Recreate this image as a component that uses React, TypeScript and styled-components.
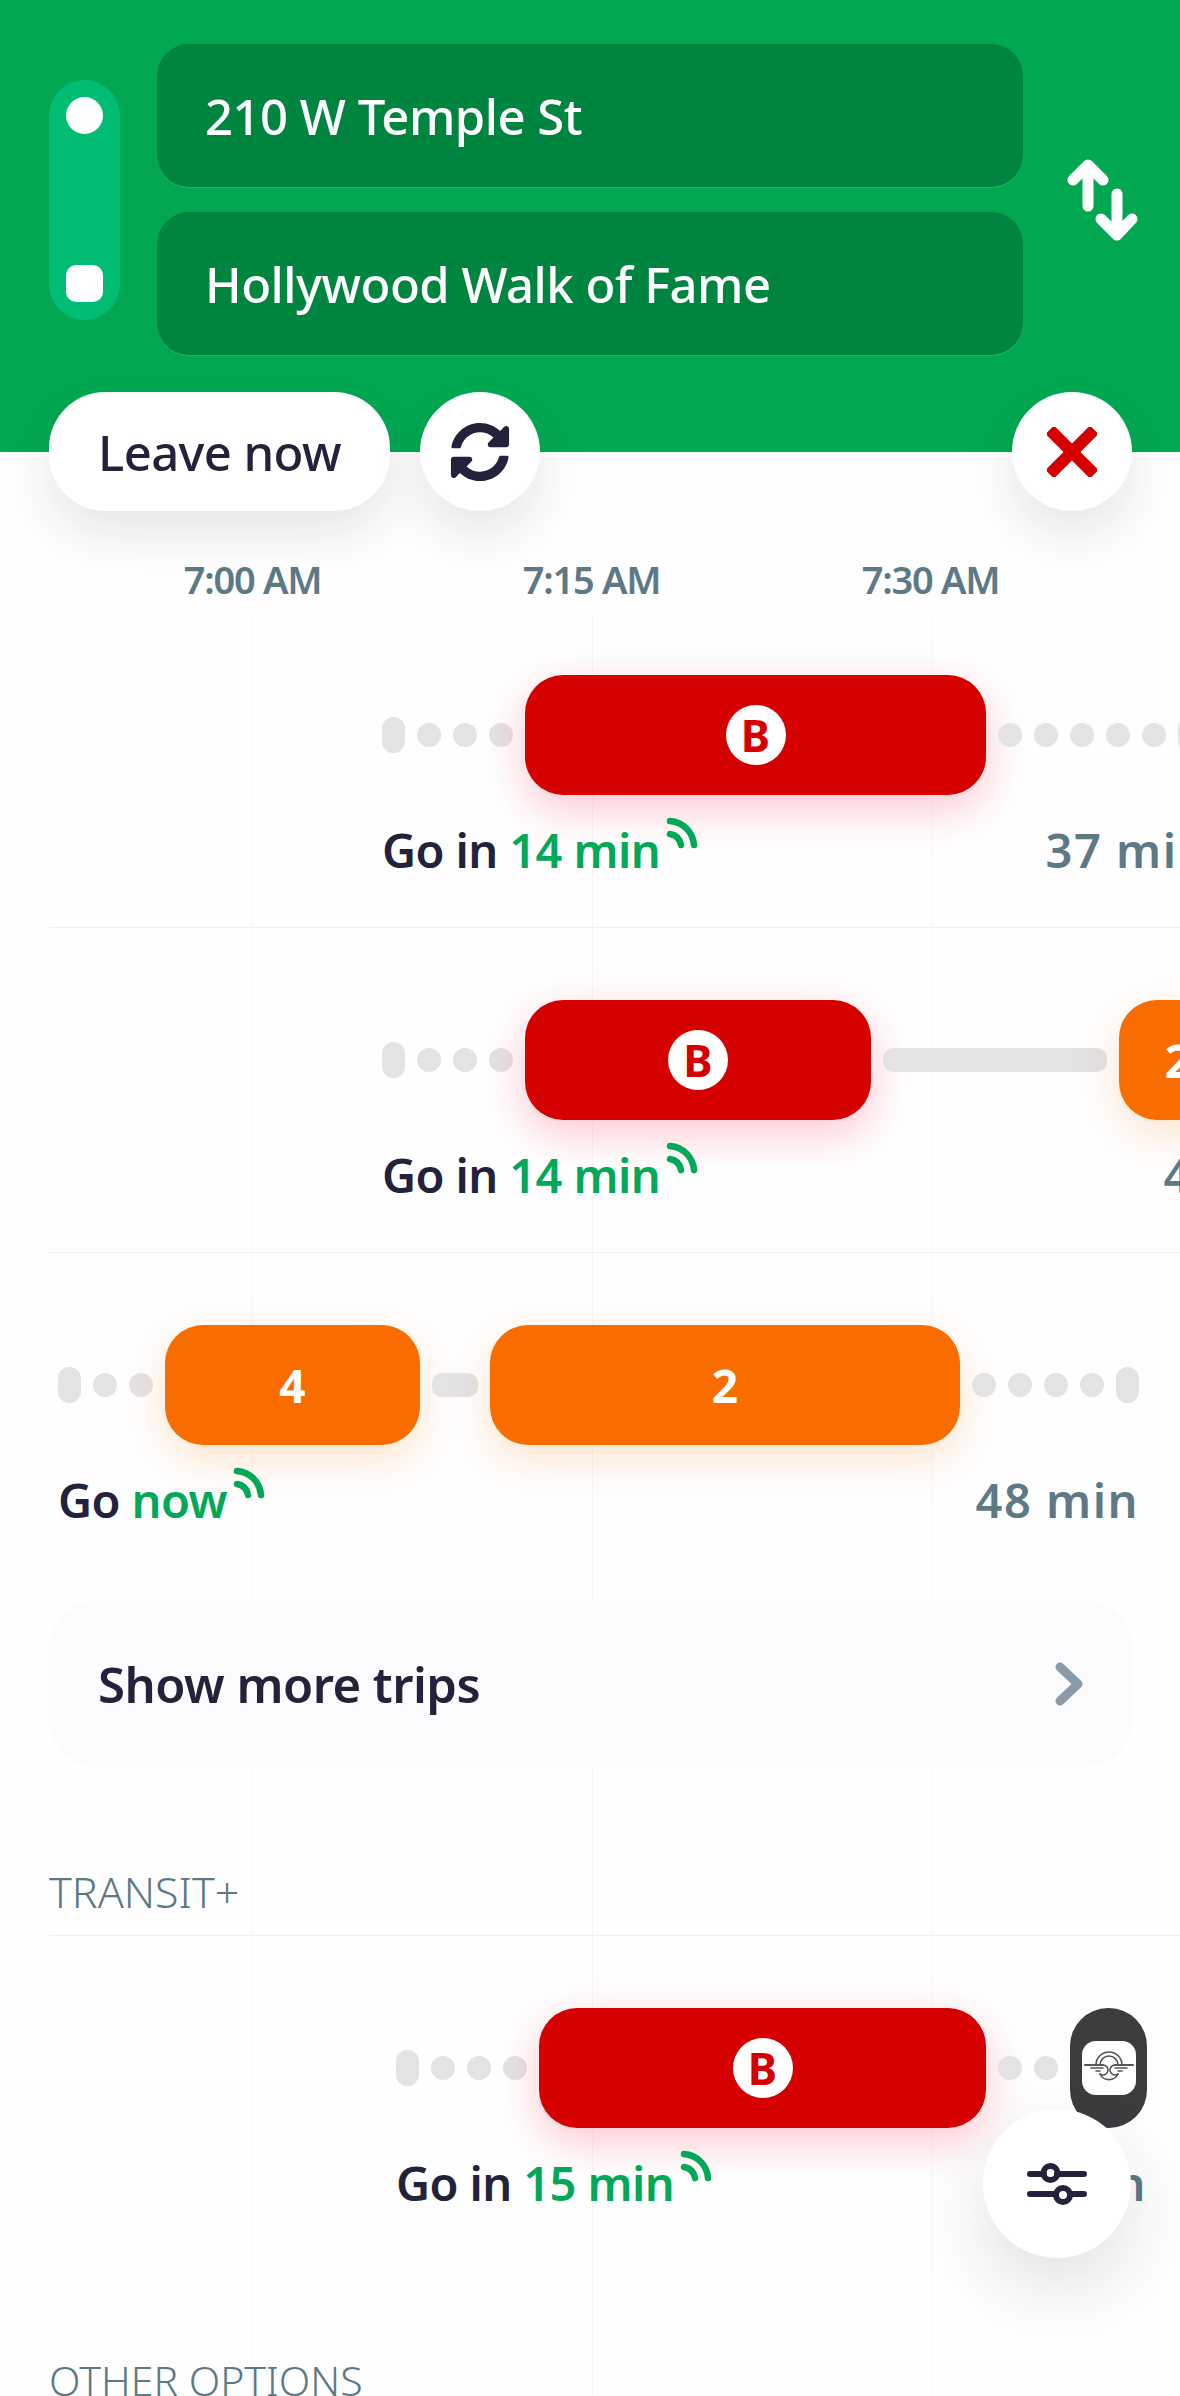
import { Fragment } from 'react';
import styled, { createGlobalStyle } from 'styled-components';
import { FaSyncAlt } from 'react-icons/fa';

const GlobalStyle = createGlobalStyle`
  html, body { margin: 0; padding: 0; background: #fff; }
  * { box-sizing: border-box; }
`;

const INK = '#22223a';
const SLATE = '#5d7985';
const GREEN = '#00a858';
const RED = '#d50000';
const ORANGE = '#f96c00';

const Page = styled.div`
  position: relative;
  width: 1180px;
  height: 2396px;
  overflow: hidden;
  background: #fefefe;
  font-family: 'Noto Sans', sans-serif;
  color: ${INK};
`;

const Header = styled.header`
  position: relative;
  z-index: 2;
  height: 452px;
  background: #02a851;
  padding: 44px 0 0 49px;
`;
const RouteRow = styled.div`
  display: flex;
  align-items: center;
`;
const StopTrack = styled.div`
  flex: none;
  display: flex;
  flex-flow: column;
  align-items: center;
  justify-content: space-between;
  width: 71px;
  height: 240px;
  padding: 17px 0 18px;
  border-radius: 36px;
  background: #00bd73;
`;
const StopDot = styled.div<{ $square?: boolean }>`
  width: 37px;
  height: 37px;
  border-radius: ${(p) => (p.$square ? '10px' : '50%')};
  background: #fff;
`;
const Inputs = styled.div`
  flex: none;
  display: flex;
  flex-flow: column;
  gap: 25px;
  width: 866px;
  margin-left: 37px;
`;
const RouteInput = styled.div`
  display: flex;
  align-items: center;
  height: 143px;
  padding-left: 48px;
  border-radius: 32px;
  background: #008540;
  box-shadow: 0 1px 1px rgba(255, 255, 255, 0.14);
  color: #fff;
  font-size: 49px;
  font-weight: 500;
  letter-spacing: -0.5px;
`;
const SwapIcon = styled.svg`
  flex: none;
  width: 76px;
  height: 84px;
  margin-left: 44px;
`;
const ButtonRow = styled.div`
  display: flex;
  gap: 30px;
  margin: 37px 48px 0 0;
`;
const LeaveButton = styled.button`
  width: 341px;
  height: 119px;
  border: 0;
  border-radius: 56px;
  background: #fff;
  color: ${INK};
  font: 500 49px 'Noto Sans', sans-serif;
  letter-spacing: -0.6px;
  box-shadow: 0 22px 50px rgba(40, 40, 60, 0.11);
`;
const RoundButton = styled.button<{ $end?: boolean }>`
  display: flex;
  align-items: center;
  justify-content: center;
  width: 120px;
  height: 119px;
  margin-left: ${(p) => (p.$end ? 'auto' : '0')};
  padding: 0;
  border: 0;
  border-radius: 50%;
  background: #fff;
  color: ${INK};
  box-shadow: 0 22px 50px rgba(40, 40, 60, 0.11);
`;

const Timeline = styled.main`
  position: relative;
  isolation: isolate;
  height: 1944px;
`;
const GridLine = styled.div<{ $x: number }>`
  position: absolute;
  z-index: -1;
  top: 163px;
  bottom: 0;
  left: ${(p) => p.$x}px;
  width: 1px;
  background: #f6f6f8;
`;
const TimeRow = styled.div`
  display: flex;
  align-items: flex-end;
  height: 151px;
  padding: 0 0 1px 83px;
`;
const TimeLabel = styled.div`
  width: 339px;
  color: ${SLATE};
  font-size: 38px;
  font-weight: 600;
  line-height: 46px;
  letter-spacing: -1.3px;
  text-align: center;
`;

const TripRow = styled.section<{ $divider?: boolean }>`
  height: 325px;
  margin-left: 49px;
  padding-top: 72px;
  border-bottom: ${(p) => (p.$divider ? '1px solid #f0f0f2' : '0')};
`;
const Trip = styled.div<{ $start: number; $width: number }>`
  width: ${(p) => p.$width}px;
  margin-left: ${(p) => p.$start - 49}px;
`;
const Track = styled.div`
  display: flex;
  align-items: center;
  gap: 12px;
  height: 120px;
`;
const EndCap = styled.div`
  flex: none;
  width: 23px;
  height: 36px;
  border-radius: 12px;
  background: #e3e2e5;
`;
const WalkDot = styled.div`
  flex: none;
  width: 24px;
  height: 24px;
  border-radius: 50%;
  background: #e3e2e5;
`;
const WalkBar = styled.div<{ $width: number }>`
  flex: none;
  width: ${(p) => p.$width}px;
  height: 24px;
  border-radius: 10px;
  background: #e3e2e5;
`;
const Segment = styled.div<{ $color: string; $glow: string; $width: number }>`
  flex: none;
  display: flex;
  align-items: center;
  justify-content: center;
  width: ${(p) => p.$width}px;
  height: 120px;
  border-radius: 38px;
  background: ${(p) => p.$color};
  box-shadow: 0 14px 44px ${(p) => p.$glow};
  color: #fff;
  font-size: 46px;
  font-weight: 700;
`;
const LineBadge = styled.div`
  display: flex;
  align-items: center;
  justify-content: center;
  width: 60px;
  height: 60px;
  border-radius: 50%;
  background: #fff;
  color: ${RED};
  font-size: 44px;
  font-weight: 700;
`;
const BikeSegment = styled.div`
  flex: none;
  display: flex;
  align-items: center;
  justify-content: center;
  width: 77px;
  height: 120px;
  border-radius: 38px;
  background: #3d3b3e;
`;
const BikeLogo = styled.svg`
  width: 54px;
  height: 54px;
  border-radius: 14px;
  background: #fff;
`;
const Labels = styled.div`
  display: flex;
  justify-content: space-between;
  margin-top: 30px;
  font-size: 47px;
  font-weight: 600;
  line-height: 50px;
  letter-spacing: -0.6px;
`;
const Depart = styled.div`
  display: flex;
  white-space: pre;
`;
const Wait = styled.span`
  color: ${GREEN};
`;
const LiveIcon = styled.svg`
  width: 32px;
  height: 32px;
  margin: -8px 0 0 6px;
`;
const Duration = styled.div`
  color: ${SLATE};
  letter-spacing: 1.5px;
`;

const MoreCard = styled.div`
  display: flex;
  align-items: center;
  justify-content: space-between;
  height: 167px;
  margin: 22px 48px 0 49px;
  padding: 0 48px 0 49px;
  border-radius: 48px;
  background: #fbfafc;
  font-size: 49px;
  font-weight: 600;
  letter-spacing: -0.5px;
`;
const SectionHead = styled.h2<{ $divider?: boolean }>`
  display: flex;
  align-items: flex-end;
  margin: 0 0 0 49px;
  padding-bottom: ${(p) => (p.$divider ? '18px' : '0')};
  border-bottom: ${(p) => (p.$divider ? '1px solid #f0f0f2' : '0')};
  color: ${SLATE};
  font-weight: 300;
  line-height: 50px;
`;
const TransitHead = styled(SectionHead)`
  height: 169px;
  font-size: 43px;
`;
const OtherHead = styled(SectionHead)`
  margin-top: 94px;
  font-size: 41px;
`;

const FilterButton = styled.button`
  position: absolute;
  z-index: 3;
  right: 49px;
  bottom: 138px;
  display: flex;
  align-items: center;
  justify-content: center;
  width: 148px;
  height: 149px;
  padding: 0;
  border: 0;
  border-radius: 50%;
  background: #fff;
  box-shadow: 0 30px 70px rgba(40, 40, 60, 0.13);
`;

const LiveMark = () => (
  <LiveIcon viewBox='0 0 32 32' fill='none' stroke={GREEN} strokeWidth='6.5' strokeLinecap='round'>
    <path d='M4 4 C17 5 27 15 28 28' />
    <path d='M4 17 C10 18 14 22 15 28' />
  </LiveIcon>
);

type Part =
  | { kind: 'cap' }
  | { kind: 'dot' }
  | { kind: 'walk'; width: number }
  | { kind: 'red'; width: number }
  | { kind: 'orange'; width: number; line: string }
  | { kind: 'bike' };

const dots = (n: number): Part[] => Array.from({ length: n }, () => ({ kind: 'dot' }));
const cap: Part = { kind: 'cap' };

const renderPart = (part: Part) => {
  switch (part.kind) {
    case 'cap':
      return <EndCap />;
    case 'dot':
      return <WalkDot />;
    case 'walk':
      return <WalkBar $width={part.width} />;
    case 'red':
      return (
        <Segment $color={RED} $glow='rgba(250, 0, 40, 0.22)' $width={part.width}>
          <LineBadge>B</LineBadge>
        </Segment>
      );
    case 'orange':
      return (
        <Segment $color={ORANGE} $glow='rgba(250, 120, 0, 0.2)' $width={part.width}>
          {part.line}
        </Segment>
      );
    case 'bike':
      return (
        <BikeSegment>
          <BikeLogo viewBox='0 0 54 54' fill='none' stroke='#555' strokeWidth='1.6' strokeLinecap='round'>
            <path d='M14 24 A13 13 0 0 1 40 24' />
            <path d='M18 24 A9 9 0 0 1 36 24' />
            <path d='M3 24 H21 M33 24 H51' strokeWidth='2' />
            <path d='M9 27 H21 M33 27 H45' />
            <path d='M14 30 H18 M36 30 H40' />
            <path d='M21 24 A5 5 0 1 1 18 33' />
            <path d='M33 24 A5 5 0 1 0 36 33' />
            <path d='M18 33 A10 10 0 0 0 36 33' />
          </BikeLogo>
        </BikeSegment>
      );
  }
};

type TripData = {
  start: number;
  width: number;
  parts: Part[];
  go: string;
  wait: string;
  duration: string;
};

const trips: TripData[] = [
  {
    start: 382,
    width: 827,
    parts: [cap, ...dots(3), { kind: 'red', width: 461 }, ...dots(5), cap],
    go: 'Go in ',
    wait: '14 min',
    duration: '37 min',
  },
  {
    start: 382,
    width: 945,
    parts: [cap, ...dots(3), { kind: 'red', width: 346 }, { kind: 'walk', width: 224 }, { kind: 'orange', width: 118, line: '2' }],
    go: 'Go in ',
    wait: '14 min',
    duration: '48 min',
  },
  {
    start: 58,
    width: 1081,
    parts: [
      cap,
      ...dots(2),
      { kind: 'orange', width: 255, line: '4' },
      { kind: 'walk', width: 46 },
      { kind: 'orange', width: 470, line: '2' },
      ...dots(4),
      cap,
    ],
    go: 'Go ',
    wait: 'now',
    duration: '48 min',
  },
];

const transitPlus: TripData = {
  start: 396,
  width: 751,
  parts: [cap, ...dots(3), { kind: 'red', width: 447 }, ...dots(2), { kind: 'bike' }],
  go: 'Go in ',
  wait: '15 min',
  duration: '37 min',
};

const TripView = ({ trip, divider }: { trip: TripData; divider?: boolean }) => (
  <TripRow $divider={divider}>
    <Trip $start={trip.start} $width={trip.width}>
      <Track>
        {trip.parts.map((part, i) => (
          <Fragment key={i}>{renderPart(part)}</Fragment>
        ))}
      </Track>
      <Labels>
        <Depart>
          {trip.go}
          <Wait>{trip.wait}</Wait>
          <LiveMark />
        </Depart>
        <Duration>{trip.duration}</Duration>
      </Labels>
    </Trip>
  </TripRow>
);

const App = () => (
  <Page>
    <GlobalStyle />
    <Header>
      <RouteRow>
        <StopTrack>
          <StopDot />
          <StopDot $square />
        </StopTrack>
        <Inputs>
          <RouteInput>210 W Temple St</RouteInput>
          <RouteInput>Hollywood Walk of Fame</RouteInput>
        </Inputs>
        <SwapIcon viewBox='0 0 76 84' fill='none' stroke='#fff' strokeWidth='11' strokeLinecap='round' strokeLinejoin='round'>
          <path d='M21 48 V8 M6 22 L21 7 L36 22' />
          <path d='M50 36 V76 M34 61 L50 77 L65 61' />
        </SwapIcon>
      </RouteRow>
      <ButtonRow>
        <LeaveButton>Leave now</LeaveButton>
        <RoundButton>
          <FaSyncAlt size={60} />
        </RoundButton>
        <RoundButton $end>
          <svg width='50' height='50' viewBox='0 0 50 50' fill='none' stroke={RED} strokeWidth='12' strokeLinecap='square'>
            <path d='M7 7 L43 43 M43 7 L7 43' />
          </svg>
        </RoundButton>
      </ButtonRow>
    </Header>
    <Timeline>
      {[252, 592, 931].map((x) => (
        <GridLine key={x} $x={x} />
      ))}
      <TimeRow>
        <TimeLabel>7:00 AM</TimeLabel>
        <TimeLabel>7:15 AM</TimeLabel>
        <TimeLabel>7:30 AM</TimeLabel>
      </TimeRow>
      {trips.map((trip, i) => (
        <TripView key={i} trip={trip} divider={i < 2} />
      ))}
      <MoreCard>
        Show more trips
        <svg width='30' height='44' viewBox='0 0 30 44' fill='none' stroke='#8a9aa8' strokeWidth='9' strokeLinecap='round' strokeLinejoin='round'>
          <path d='M6 5 L24 22 L6 39' />
        </svg>
      </MoreCard>
      <TransitHead $divider>TRANSIT+</TransitHead>
      <TripView trip={transitPlus} />
      <OtherHead>OTHER OPTIONS</OtherHead>
    </Timeline>
    <FilterButton>
      <svg width='60' height='44' viewBox='0 0 60 44' fill='none' stroke={INK} strokeWidth='6' strokeLinecap='round'>
        <path d='M3 12 H17 M30 12 H57 M3 32 H29 M43 32 H57' />
        <circle cx='23.5' cy='11' r='7' />
        <circle cx='36' cy='33' r='7' />
      </svg>
    </FilterButton>
  </Page>
);

export default App;
